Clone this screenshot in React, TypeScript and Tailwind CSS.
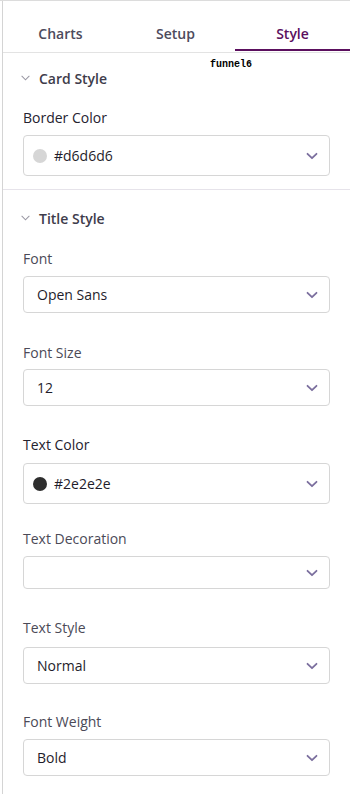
import React from 'react';

const font = { fontFamily: '"Open Sans", "Noto Sans", sans-serif' };

function Chevron({ className }: { className: string }) {
  return (
    <svg className={className} viewBox="0 0 12 8" fill="none" stroke="currentColor" strokeWidth={1.8} strokeLinecap="round" strokeLinejoin="round">
      <path d="M1.5 1.8 6 6.2l4.5-4.4" />
    </svg>
  );
}

function SectionHeader({ title }: { title: string }) {
  return (
    <div className="flex items-center h-5 pl-[21px]">
      <svg className="w-[9px] h-[6px] text-[#9a98a4]" viewBox="0 0 10 6" fill="none" stroke="currentColor" strokeWidth={1.2} strokeLinecap="round">
        <path d="M1 1l4 4 4-4" />
      </svg>
      <span className="ml-[9px] text-[14px] font-semibold text-[#3e3c4b]">{title}</span>
    </div>
  );
}

interface FieldProps {
  label: string;
  value?: string;
  swatch?: string;
  strong?: boolean;
  height: string;
  gap: string;
  top: string;
}

function Field({ label, value, swatch, strong, height, gap, top }: FieldProps) {
  return (
    <div className={`flex flex-col ${top}`}>
      <div className={`h-5 leading-5 text-[14px] ${strong ? 'font-medium text-[#25222f]' : 'text-[#4b4a57]'}`}>{label}</div>
      <div className={`${gap} ${height} flex items-center border border-[#d6d6d6] rounded-[4px] bg-white pr-[11px] ${swatch ? 'pl-[9px]' : 'pl-[13px]'}`}>
        {swatch && <span className={`w-[14px] h-[14px] rounded-full mr-[7px] ${swatch}`} />}
        <span className="flex-1 text-[14px] text-[#1f1d2b]">{value}</span>
        <Chevron className="w-[12px] h-[8px] text-[#7b6f9e]" />
      </div>
    </div>
  );
}

export default function App() {
  return (
    <div className="w-[350px] h-[794px] bg-white relative overflow-hidden border-t border-[#dcdcdc]" style={font}>
      <div className="absolute left-[2px] top-0 bottom-0 w-px bg-[#d4d4d4]" />

      {/* Tabs */}
      <div className="ml-[3px] flex h-[52px] border-b border-[#e3e3e3]">
        <div className="w-[115px] pt-[22px] text-center text-[14px] font-semibold text-[#4d4b5c]">Charts</div>
        <div className="w-[115px] pt-[22px] text-center text-[14px] font-semibold text-[#4d4b5c]">Setup</div>
        <div className="w-[115px] ml-[2px] pt-[22px] text-center text-[14px] font-semibold text-[#5b0f5e] border-b-2 border-[#5b0f5e] h-[50px]">Style</div>
      </div>

      {/* overlay label */}
      <div className="absolute left-[200px] top-[52px] w-[150px] h-[20px] bg-white">
        <span className="absolute left-[10px] top-[7px] text-[10px] leading-none font-bold text-black" style={{ fontFamily: '"Liberation Mono", monospace' }}>funnel6</span>
      </div>

      {/* Card Style */}
      <div className="pt-[15px]">
        <SectionHeader title="Card Style" />
        <div className="pl-[23px] pr-[20px]">
          <Field label="Border Color" value="#d6d6d6" swatch="bg-[#d6d6d6]" strong height="h-[41px]" gap="mt-[7px]" top="mt-[20px]" />
        </div>
      </div>

      <div className="ml-[3px] mt-[13px] h-px bg-[#e6e3ea]" />

      {/* Title Style */}
      <div className="pt-[18px]">
        <SectionHeader title="Title Style" />
        <div className="pl-[23px] pr-[20px]">
          <Field label="Font" value="Open Sans" height="h-[37px]" gap="mt-[7px]" top="mt-[21px]" />
          <Field label="Font Size" value="12" height="h-[37px]" gap="mt-[6px]" top="mt-[30px]" />
          <Field label="Text Color" value="#2e2e2e" swatch="bg-[#2e2e2e]" strong height="h-[41px]" gap="mt-[8px]" top="mt-[29px]" />
          <Field label="Text Decoration" value="" height="h-[33px]" gap="mt-[7px]" top="mt-[25px]" />
          <Field label="Text Style" value="Normal" height="h-[37px]" gap="mt-[9px]" top="mt-[29px]" />
          <Field label="Font Weight" value="Bold" height="h-[37px]" gap="mt-[7px]" top="mt-[28px]" />
        </div>
      </div>
    </div>
  );
}
